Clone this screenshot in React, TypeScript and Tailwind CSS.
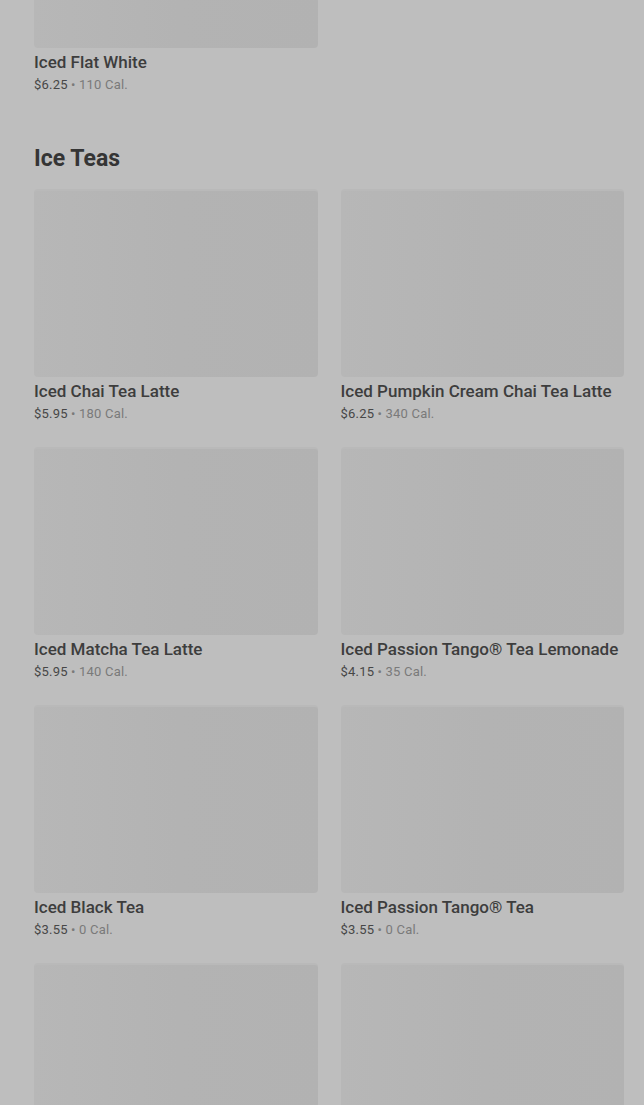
const iceTeas = [
  { name: "Iced Chai Tea Latte", price: "$5.95", cal: "180 Cal." },
  { name: "Iced Pumpkin Cream Chai Tea Latte", price: "$6.25", cal: "340 Cal." },
  { name: "Iced Matcha Tea Latte", price: "$5.95", cal: "140 Cal." },
  { name: "Iced Passion Tango® Tea Lemonade", price: "$4.15", cal: "35 Cal." },
  { name: "Iced Black Tea", price: "$3.55", cal: "0 Cal." },
  { name: "Iced Passion Tango® Tea", price: "$3.55", cal: "0 Cal." },
  { name: "Iced Green Tea", price: "$3.55", cal: "0 Cal." },
  { name: "Iced Peach Green Tea", price: "$4.15", cal: "60 Cal." },
];

function ProductCard({ name, price, cal }: { name: string; price: string; cal: string }) {
  return (
    <div className="flex flex-col">
      <div className="h-[188px] rounded-sm border-t-2 border-[#b9b9b9] bg-gradient-to-r from-[#b7b7b7] via-[#b3b3b3] to-[#b2b2b2]" />
      <p className="mt-[3px] text-[17px] leading-[22px] font-medium text-[#3d3d3d]">{name}</p>
      <p className="mt-[2px] text-[13px] leading-[20px] tracking-[0.2px]">
        <span className="text-[#474747]">{price}</span>
        <span className="text-[#7a7a7a]"> • {cal}</span>
      </p>
    </div>
  );
}

export default function App() {
  return (
    <div className="h-[1105px] overflow-hidden bg-[#bebebe] font-['Roboto',sans-serif]">
      <div className="pl-[34px] pr-[20px] -mt-[140px]">
        <div className="grid grid-cols-2 gap-x-[23px]">
          <ProductCard name="Iced Flat White" price="$6.25" cal="110 Cal." />
        </div>

        <h2 className="mt-[49px] text-[23px] leading-[30px] font-bold text-[#353535]">Ice Teas</h2>

        <div className="mt-[15px] grid grid-cols-2 gap-x-[23px] gap-y-[23px]">
          {iceTeas.map((item, key) => (
            <ProductCard key={key} {...item} />
          ))}
        </div>
      </div>
    </div>
  );
}
